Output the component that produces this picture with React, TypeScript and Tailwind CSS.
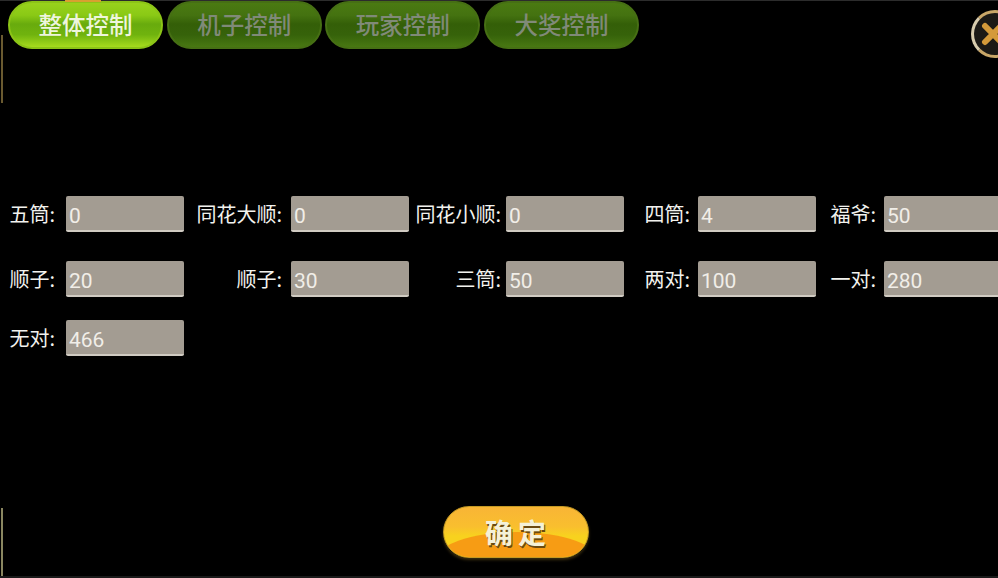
import React from 'react';

const cjk = "font-['Noto_Sans_CJK_SC','Noto_Sans',sans-serif]";

const tabs = ['整体控制', '机子控制', '玩家控制', '大奖控制'];

const fields = [
  { label: '五筒:', value: '0' },
  { label: '同花大顺:', value: '0' },
  { label: '同花小顺:', value: '0' },
  { label: '四筒:', value: '4' },
  { label: '福爷:', value: '50' },
  { label: '顺子:', value: '20' },
  { label: '顺子:', value: '30' },
  { label: '三筒:', value: '50' },
  { label: '两对:', value: '100' },
  { label: '一对:', value: '280' },
  { label: '无对:', value: '466' },
];

// label's distance from its input differs per column
const labelPad = ['pr-[11px]', 'pr-[9px]', 'pr-[5px]', 'pr-[8px]', 'pr-[8px]'];

const Tab = ({ label, active }: { label: string; active: boolean }) => (
  <div
    className={
      active
        ? "flex h-[48px] w-[155px] items-center justify-center rounded-[24px] border-2 border-[#8cc417] bg-[linear-gradient(180deg,#98d21c_0%,#8ac915_28%,#68ab0d_48%,#70b30e_72%,#a6dc1d_100%)] text-[23.5px] font-medium text-[#eef5dc]"
        : "flex h-[48px] w-[155px] items-center justify-center rounded-[24px] border-2 border-[#466f14] bg-[linear-gradient(180deg,#4a7a12_0%,#447210_28%,#345f08_48%,#36620a_72%,#487812_100%)] text-[23.5px] font-medium text-[#808a78]"
    }
  >
    <span className="leading-none">{label}</span>
  </div>
);

const Field = ({ label, value, pad }: { label: string; value: string; pad: string }) => (
  <>
    <span className={`${pad} text-right text-[20px] leading-none text-[#f2f2ee]`}>{label}</span>
    <div className="flex h-[36px] items-center rounded-[2px] border-b-2 border-[#d0cbc2] bg-[#a39c92] pl-[3px] pt-[7px] font-['Roboto',sans-serif] text-[21px] text-[#f1eee8]">
      {value}
    </div>
  </>
);

export default function App() {
  return (
    <div className={`relative flex h-[578px] w-[998px] flex-col overflow-hidden bg-black ${cjk}`}>
      <div className="flex gap-[3.67px] pl-[8px] pt-[1px]">
        {tabs.map((t, i) => (
          <Tab key={t} label={t} active={i === 0} />
        ))}
      </div>

      <div className="mt-[147px] grid w-[1002px] grid-cols-[66px_118px_107px_118px_97px_118px_74px_118px_68px_118px] items-center gap-y-[29px] [&>*:nth-child(n+21)]:mt-[-6px]">
        {fields.map((f, i) => (
          <Field key={i} label={f.label} value={f.value} pad={labelPad[i % 5]} />
        ))}
      </div>

      <div className="mt-auto flex justify-center pb-[20px] pl-[33px]">
        <div className="relative flex h-[52px] w-[146px] items-center justify-center overflow-hidden rounded-[26px] border border-[#c49a24] bg-[linear-gradient(180deg,#f8b536_0%,#f9bf2e_40%,#f8d21e_58%,#f8d21e_100%)] shadow-[0_2px_3px_#3a2e10]">
          <div className="absolute left-[-10px] top-[25px] h-[60px] w-[166px] rounded-[50%] bg-[#f79c14]" />
          <span className="relative pl-[5px] text-[28px] font-bold leading-none tracking-[5px] text-[#f4f1d8] [text-shadow:1px_2px_0_#6b4a10]">
            确定
          </span>
        </div>
      </div>

      {/* frame scraps left over at the window edges */}
      <div className="absolute left-[1px] top-[35px] h-[68px] w-[2px] bg-[#6a5a30]" />
      <div className="absolute bottom-[2px] left-[1px] h-[68px] w-[2px] bg-[#8a8660]" />
      <div className="absolute left-0 right-0 top-0 h-px bg-[#2c2c2c]" />
      <div className="absolute bottom-0 left-0 right-0 h-[2px] bg-[#1a1a1a]" />
      <div className="absolute left-[65px] top-0 h-[2px] w-[36px] bg-[#d8a030]" />

      <div className="absolute left-[971px] top-[10px] flex h-[48px] w-[48px] items-center justify-center rounded-full border-[3px] border-[#c9a768] border-l-[#d8ccae] bg-[#1c1a16] pr-[4px]">
        <svg width="26" height="26" viewBox="0 0 26 26">
          <path d="M5 5 L21 21 M21 5 L5 21" stroke="#d49a3a" strokeWidth="6" strokeLinecap="round" />
        </svg>
      </div>
    </div>
  );
}
